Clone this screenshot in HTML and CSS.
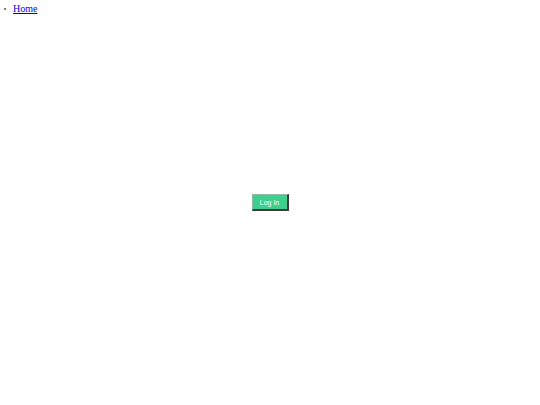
FILE: index.html
```html
<!DOCTYPE html>
<html>
<head>
<meta charset="utf-8">
<link rel="stylesheet" href="styles.css">
</head>
<body class="page">
<nav class="nav">
<ul class="nav-list">
<li class="nav-item"><a class="nav-link" href="#">Home</a></li>
</ul>
</nav>
<main class="stage">
<button class="login-btn" type="button">Log In</button>
</main>
</body>
</html>
```

FILE: styles.css
```css
html, body {
  margin: 0;
  padding: 0;
  height: 100%;
  background: #ffffff;
}
.page {
  display: grid;
  grid-template: 100vh / 100vw;
  font-family: "Liberation Serif", "Times New Roman", serif;
}
.nav {
  grid-area: 1 / 1;
  align-self: start;
  z-index: 1;
}
.nav-list {
  margin: 2px 0 0 0;
  padding-left: 4px;
  list-style: none;
  font-size: 10px;
  line-height: 14px;
}
.nav-item::before {
  content: "";
  display: inline-block;
  width: 2px;
  height: 2px;
  border-radius: 50%;
  background: #555555;
  margin-right: 7px;
  vertical-align: 2px;
}
.nav-link {
  color: #0000ee;
}
.stage {
  grid-area: 1 / 1;
  display: flex;
  align-items: center;
  justify-content: center;
}
.login-btn {
  width: 37px;
  height: 17px;
  padding: 0;
  background: #3ecf8e;
  color: #f4fff9;
  font-family: "Liberation Sans", Arial, sans-serif;
  font-size: 7px;
  border-style: solid;
  border-color: #8fb8a4 #3a3a3a #3a3a3a #8fb8a4;
  border-width: 1px 2px 2px 1px;
  box-sizing: border-box;
}
```
